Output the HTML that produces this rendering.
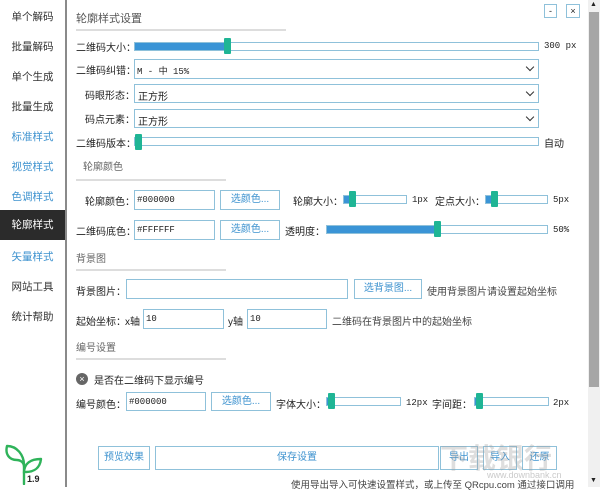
<!DOCTYPE html>
<html><head><meta charset="utf-8"><style>
*{margin:0;padding:0;box-sizing:border-box}
body{width:600px;height:487px;overflow:hidden;background:#fff;font-family:"Liberation Sans","Noto Sans CJK SC",sans-serif;font-size:10px;color:#222;position:relative}
.a{position:absolute;white-space:nowrap}
.side{position:absolute;left:0;top:0;width:67px;height:487px;border-right:2px solid #8a8a8a;background:#fff}
.si{position:absolute;left:0;width:65px;text-align:center;font-size:10.5px;color:#333}
.blue{color:#3d92cf}
.box{position:absolute;border:1px solid #8fc1da;background:#fff}
.btn{position:absolute;border:1px solid #8fc1da;background:#fff;color:#3d92cf;text-align:center;font-size:10px}
.line{position:absolute;height:2px;background:#ddd}
.tr{position:absolute;border:1px solid #8fc1da;background:#fff;height:9px}
.fill{position:absolute;top:0;left:0;height:100%;background:#3a94d6}
.th{position:absolute;width:7px;height:16px;background:#1fb595;border-radius:1px}
.mono{font-family:"Liberation Mono","DejaVu Sans Mono",monospace;font-size:9px}
.chev{position:absolute;right:5px;top:4px;width:6px;height:6px;border-right:1.3px solid #333;border-bottom:1.3px solid #333;transform:rotate(45deg)}
</style></head><body>
<div class="side">
<div class="si" style="top:9px">单个解码</div>
<div class="si" style="top:39px">批量解码</div>
<div class="si" style="top:69px">单个生成</div>
<div class="si" style="top:99px">批量生成</div>
<div class="si blue" style="top:129px">标准样式</div>
<div class="si blue" style="top:159px">视觉样式</div>
<div class="si blue" style="top:189px">色调样式</div>
<div class="si" style="top:210px;height:30px;line-height:30px;background:#2b2b2b;color:#fff">轮廓样式</div>
<div class="si blue" style="top:249px">矢量样式</div>
<div class="si" style="top:279px">网站工具</div>
<div class="si" style="top:309px">统计帮助</div>
<svg style="position:absolute;left:4px;top:443px" width="40" height="42" viewBox="0 0 40 42" fill="none" stroke="#2fb35a" stroke-width="2.4" stroke-linecap="round" stroke-linejoin="round">
<path d="M20 41 V22 C20 12 13 3 3 3 C1 11 5 17 13 17 C16 17 20 19 20 24"/>
<path d="M20 30 C20 20 27 16 37 16 C36 25 30 29 22 29"/>
</svg>
<div class="a" style="left:27px;top:474px;font-size:9px;font-weight:bold">1.9</div>
</div>
<div class="a" style="left:76px;top:10px;font-size:11px;color:#555">轮廓样式设置</div>
<div class="line" style="left:76px;top:29px;width:210px"></div>
<div class="box" style="left:544px;top:4px;width:13px;height:14px;text-align:center;font-size:9px;line-height:12px">-</div>
<div class="box" style="left:566px;top:4px;width:14px;height:14px;text-align:center;font-size:9px;line-height:12px">×</div>
<div style="position:absolute;left:588px;top:0;width:12px;height:487px;background:#f0f0f0"></div>
<div style="position:absolute;left:589px;top:12px;width:10px;height:375px;background:#a6a6a6"></div>
<div class="a" style="left:590px;top:1px;font-size:7px">▲</div>
<div class="a" style="left:590px;top:477px;font-size:7px">▼</div>

<div class="a" style="left:76px;top:39px">二维码大小：</div>
<div class="tr" style="left:134px;top:42px;width:405px"><div class="fill" style="width:90px"></div></div>
<div class="th" style="left:224px;top:38px"></div>
<div class="a mono" style="left:544px;top:41px">300 px</div>

<div class="a" style="left:76px;top:62px">二维码纠错：</div>
<div class="box" style="left:134px;top:59px;width:405px;height:20px"><span class="a mono" style="left:2px;top:4px">M - 中 15%</span><div class="chev"></div></div>
<div class="a" style="left:85px;top:87px">码眼形态：</div>
<div class="box" style="left:134px;top:84px;width:405px;height:19px"><span class="a" style="left:3px;top:3px">正方形</span><div class="chev"></div></div>
<div class="a" style="left:85px;top:111px">码点元素：</div>
<div class="box" style="left:134px;top:109px;width:405px;height:19px"><span class="a" style="left:3px;top:3px">正方形</span><div class="chev"></div></div>
<div class="a" style="left:76px;top:135px">二维码版本：</div>
<div class="tr" style="left:134px;top:137px;width:405px"></div>
<div class="th" style="left:135px;top:134px"></div>
<div class="a" style="left:544px;top:135px">自动</div>

<div class="a" style="left:83px;top:158px;color:#666">轮廓颜色</div>
<div class="line" style="left:76px;top:179px;width:150px"></div>
<div class="a" style="left:85px;top:193px">轮廓颜色：</div>
<div class="box mono" style="left:134px;top:190px;width:81px;height:20px;padding:4px 2px">#000000</div>
<div class="btn" style="left:220px;top:190px;width:60px;height:20px;line-height:18px">选颜色...</div>
<div class="a" style="left:293px;top:193px">轮廓大小：</div>
<div class="tr" style="left:343px;top:195px;width:64px"><div class="fill" style="width:8px"></div></div>
<div class="th" style="left:349px;top:191px"></div>
<div class="a mono" style="left:412px;top:195px">1px</div>
<div class="a" style="left:435px;top:193px">定点大小：</div>
<div class="tr" style="left:485px;top:195px;width:63px"><div class="fill" style="width:8px"></div></div>
<div class="th" style="left:491px;top:191px"></div>
<div class="a mono" style="left:553px;top:195px">5px</div>

<div class="a" style="left:76px;top:223px">二维码底色：</div>
<div class="box mono" style="left:134px;top:220px;width:81px;height:20px;padding:4px 2px">#FFFFFF</div>
<div class="btn" style="left:220px;top:220px;width:60px;height:20px;line-height:18px">选颜色...</div>
<div class="a" style="left:285px;top:223px">透明度：</div>
<div class="tr" style="left:326px;top:225px;width:222px"><div class="fill" style="width:110px"></div></div>
<div class="th" style="left:434px;top:221px"></div>
<div class="a mono" style="left:553px;top:225px">50%</div>

<div class="a" style="left:76px;top:250px;color:#666">背景图</div>
<div class="line" style="left:76px;top:269px;width:150px"></div>
<div class="a" style="left:76px;top:283px">背景图片：</div>
<div class="box" style="left:126px;top:279px;width:222px;height:20px"></div>
<div class="btn" style="left:354px;top:279px;width:68px;height:20px;line-height:18px">选背景图...</div>
<div class="a" style="left:427px;top:283px;color:#444">使用背景图片请设置起始坐标</div>
<div class="a" style="left:76px;top:313px">起始坐标：</div>
<div class="a" style="left:125px;top:313px">x轴</div>
<div class="box mono" style="left:143px;top:309px;width:81px;height:20px;padding:4px 2px">10</div>
<div class="a" style="left:228px;top:313px">y轴</div>
<div class="box mono" style="left:247px;top:309px;width:80px;height:20px;padding:4px 2px">10</div>
<div class="a" style="left:332px;top:313px;color:#444">二维码在背景图片中的起始坐标</div>

<div class="a" style="left:76px;top:339px;color:#666">编号设置</div>
<div class="line" style="left:76px;top:358px;width:150px"></div>
<div style="position:absolute;left:76px;top:373px;width:12px;height:12px;border-radius:50%;background:#666;color:#fff;font-size:9px;line-height:12px;text-align:center">×</div>
<div class="a" style="left:94px;top:372px">是否在二维码下显示编号</div>
<div class="a" style="left:76px;top:396px">编号颜色：</div>
<div class="box mono" style="left:126px;top:392px;width:80px;height:19px;padding:4px 2px">#000000</div>
<div class="btn" style="left:211px;top:392px;width:60px;height:19px;line-height:17px">选颜色...</div>
<div class="a" style="left:276px;top:396px">字体大小：</div>
<div class="tr" style="left:326px;top:397px;width:75px"><div class="fill" style="width:2px"></div></div>
<div class="th" style="left:328px;top:393px"></div>
<div class="a mono" style="left:406px;top:398px">12px</div>
<div class="a" style="left:432px;top:396px">字间距：</div>
<div class="tr" style="left:474px;top:397px;width:75px"><div class="fill" style="width:2px"></div></div>
<div class="th" style="left:476px;top:393px"></div>
<div class="a mono" style="left:553px;top:398px">2px</div>

<div class="btn" style="left:98px;top:446px;width:52px;height:24px;line-height:22px">预览效果</div>
<div class="btn" style="left:155px;top:446px;width:284px;height:24px;line-height:22px">保存设置</div>
<div class="btn" style="left:440px;top:446px;width:38px;height:24px;line-height:22px">导出</div>
<div class="btn" style="left:483px;top:446px;width:34px;height:24px;line-height:22px">导入</div>
<div class="btn" style="left:522px;top:446px;width:35px;height:24px;line-height:22px">还原</div>
<div class="a" style="left:440px;top:437px;font-size:28px;color:rgba(160,160,160,.35);font-weight:bold">下载银行</div>
<div class="a" style="left:487px;top:470px;font-size:9px;color:rgba(150,150,150,.5)">www.downbank.cn</div>
<div class="a" style="left:291px;top:477px;font-size:9.5px;color:#444">使用导出导入可快速设置样式，或上传至 QRcpu.com 通过接口调用</div>
</body></html>
